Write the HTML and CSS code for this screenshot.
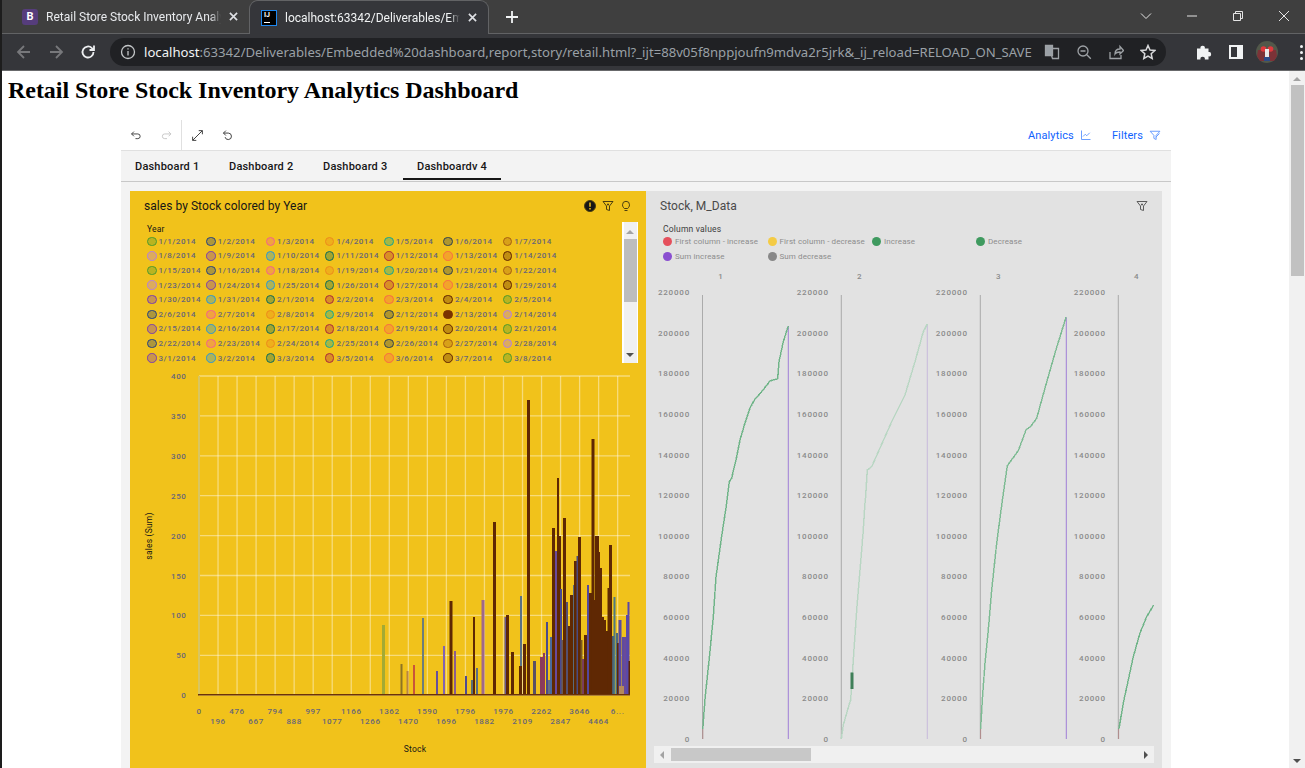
FILE: index.html
```html
<!DOCTYPE html>
<html lang="en">
<head>
  <meta charset="UTF-8">
  <title>Retail Store Stock Inventory Analytics Dashboard</title>
  <link rel="stylesheet" href="styles.css">
</head>
<body>

<div id="window">
  <!-- tab strip -->
  <div class="tabstrip">
    <div class="tab">
      <span class="favicon favicon-b">B</span>
      <span class="tab-title">Retail Store Stock Inventory Analy</span>
      <svg class="tab-close" viewBox="0 0 10 10"><path d="M1 1l8 8M9 1l-8 8"/></svg>
    </div>
    <div class="tab tab-active">
      <span class="favicon favicon-ij"><b>IJ</b><i></i></span>
      <span class="tab-title">localhost:63342/Deliverables/Emb</span>
      <svg class="tab-close" viewBox="0 0 10 10"><path d="M1 1l8 8M9 1l-8 8"/></svg>
    </div>
    <svg class="new-tab" viewBox="0 0 12 12"><path d="M6 0v12M0 6h12"/></svg>
    <div class="window-controls">
      <svg viewBox="0 0 12 12"><path d="M1 3.500l5 5 5-5"/></svg>
      <svg viewBox="0 0 12 12"><path d="M1 6h10"/></svg>
      <svg viewBox="0 0 12 12"><path d="M1.500 3.500h7v7h-7zM3.500 3.500v-2h7v7h-2"/></svg>
      <svg viewBox="0 0 12 12"><path d="M1 1l10 10M11 1L1 11"/></svg>
    </div>
  </div>

  <!-- address bar -->
  <div class="toolbar">
    <svg class="nav-icon dim" viewBox="0 0 16 16"><path d="M14 8H2M8 2L2 8l6 6"/></svg>
    <svg class="nav-icon dim" viewBox="0 0 16 16"><path d="M2 8h12M8 2l6 6-6 6"/></svg>
    <svg class="nav-icon bright" viewBox="0 0 16 16"><path d="M13.500 8a5.500 5.500 0 1 1-1.600-3.900L14 6M14 1.500V6H9.500"/></svg>
    <div class="omnibox">
      <svg class="info-icon" viewBox="0 0 16 16"><circle cx="8" cy="8" r="6.500"/><path d="M8 7v4.500M8 4.200v1.300"/></svg>
      <div class="url"><span class="url-host">localhost</span>:63342/Deliverables/Embedded%20dashboard,report,story/retail.html?_ijt=88v05f8nppjoufn9mdva2r5jrk&amp;_ij_reload=RELOAD_ON_SAVE</div>
      <div class="omni-actions">
        <svg viewBox="0 0 16 16"><path d="M1.500 1.500h7v10h-7z" fill="#9aa0a6"/><path d="M8.500 4.500h6v10h-6l-1-3h1"/></svg>
        <svg viewBox="0 0 16 16"><circle cx="7" cy="7" r="5"/><path d="M4.500 7h5M10.800 10.800l4 4"/></svg>
        <svg viewBox="0 0 16 16"><path d="M2 8v6.500h11V11M7 10c0-3 2-5 5-5V2.500L15.500 6.500 12 10V8c-2 0-4 .5-5 2z"/></svg>
        <svg viewBox="0 0 16 16"><path d="M8 1.500l2 4.500 4.800.5-3.600 3.200 1 4.800L8 12.100l-4.200 2.400 1-4.800L1.200 6.500 6 6z"/></svg>
      </div>
    </div>
    <div class="browser-actions">
      <svg class="puzzle" viewBox="0 0 16 16"><path d="M1 4.500h3.500a2.200 2.200 0 1 1 4.300 0H12.500V8a2.200 2.200 0 1 1 0 4.300V15.500H8.800a2.200 2.200 0 1 0-4.300 0H1z"/></svg>
      <span class="side-panel"></span>
      <svg class="avatar" viewBox="0 0 22 22"><circle cx="11" cy="11" r="11" fill="#52584a"/><path d="M2 9h18l1 6-3 5H4l-3-5z" fill="#7c3237"/><circle cx="7.500" cy="8" r="2.800" fill="#df3a3e"/><circle cx="14.500" cy="8" r="2.800" fill="#df3a3e"/><path d="M9 8h4v8H9z" fill="#e8e8e8"/><path d="M8 16h6v4H8z" fill="#2d4a86"/></svg>
      <span class="dots"><i></i><i></i><i></i></span>
    </div>
  </div>

  <div class="viewport">
    <div class="page">
      <h1>Retail Store Stock Inventory Analytics Dashboard</h1>

      <div class="report">
        <div class="report-toolbar">
          <div class="tool-group tool-group-first">
            <svg viewBox="0 0 16 16"><path d="M5 3L2 6l3 3M2 6h8a3 3 0 0 1 0 6H7"/></svg>
            <svg class="tool-off" viewBox="0 0 16 16"><path d="M11 3l3 3-3 3M14 6H6a3 3 0 0 0 0 6h3"/></svg>
          </div>
          <div class="tool-group">
            <svg viewBox="0 0 16 16"><path d="M9.500 2H14v4.500M14 2L2 14M2 9.500V14h4.500"/></svg>
            <svg viewBox="0 0 16 16"><path d="M6 2L3 5l3 3M3 5h6a4 4 0 1 1-4 5"/></svg>
          </div>
          <div class="report-links">
            <span class="report-link">Analytics
              <svg viewBox="0 0 16 16"><path d="M2 2v12h12M4 10l3-3 2 2 4-4"/></svg>
            </span>
            <span class="report-link">Filters
              <svg viewBox="0 0 16 16"><path d="M1.500 3h13L9.500 8.500V14l-3-1.500v-4z"/><path d="M9 11l5-5"/></svg>
            </span>
          </div>
        </div>

        <div class="report-tabs">
          <span class="report-tab">Dashboard 1</span>
          <span class="report-tab">Dashboard 2</span>
          <span class="report-tab">Dashboard 3</span>
          <span class="report-tab report-tab-active">Dashboardv 4</span>
        </div>

        <div class="panels">
          <div class="panel panel-yellow">
            <div class="panel-head">
              <span class="panel-title">sales by Stock colored by Year</span>
              <span class="panel-icons">
                <svg viewBox="0 0 12 12"><circle cx="6" cy="6" r="5.500" fill="#161616"/><path d="M6 2.500v4.200M6 8v1.500" stroke="#f1c21b" stroke-width="1.500"/></svg>
                <svg viewBox="0 0 12 12"><path d="M1 1.500h10L7.500 6v4.500l-3-1V6z"/><path d="M6 3.500v2M5 4.500h2"/></svg>
                <svg viewBox="0 0 12 12"><path d="M4.300 8.500C3.500 7.500 2.500 6.600 2.500 4.800a3.500 3.500 0 0 1 7 0c0 1.800-1 2.700-1.800 3.700zM4.500 10.500h3"/></svg>
              </span>
            </div>
            <div class="year-legend">
              <div class="year-legend-body">
                <div class="legend-name">Year</div>
                <div class="year-grid" id="year-grid"></div>
              </div>
              <div class="legend-scroll">
                <span class="arrow-up"></span>
                <span class="legend-thumb"></span>
                <span class="arrow-down"></span>
              </div>
            </div>
            <svg class="bar-chart" id="bar-chart" viewBox="130 368 516 400"></svg>
          </div>

          <div class="panel panel-gray">
            <div class="panel-head">
              <span class="panel-title">Stock, M_Data</span>
              <span class="panel-icons">
                <svg viewBox="0 0 12 12"><path d="M1 1.500h10L7.500 6v4.500l-3-1V6z"/><path d="M6 3.500v2M5 4.500h2"/></svg>
              </span>
            </div>
            <div class="col-legend">
              <div class="legend-name">Column values</div>
              <div class="col-grid" id="col-grid"></div>
            </div>
            <svg class="facet-chart" id="facet-chart" viewBox="646 268 508 478"></svg>
            <div class="hscroll">
              <span class="arrow-left"></span>
              <div class="hscroll-track"><span class="hscroll-thumb"></span></div>
              <span class="arrow-right"></span>
            </div>
          </div>
        </div>
      </div>
    </div>

    <div class="scrollbar">
      <span class="arrow-up"></span>
      <span class="scrollbar-thumb"></span>
      <span class="arrow-down"></span>
    </div>
  </div>
</div>

<script src="script.js"></script>
</body>
</html>
```

FILE: styles.css
```css
* {
  box-sizing: border-box;
}

body {
  margin: 0;
  height: 100vh;
  overflow: hidden;
  background: #fff;
  font-family: Roboto, "Liberation Sans", sans-serif;
}

#window {
  height: 100vh;
  display: flex;
  flex-direction: column;
  border-left: 2px solid #1d1d1d;
}

/* browser chrome */
.tabstrip {
  height: 34px;
  flex: none;
  display: flex;
  align-items: flex-end;
  padding-left: 10px;
  background: #3f3f3f;
  border-bottom: 1px solid #626365;
}

.tab {
  width: 237px;
  height: 33px;
  display: flex;
  align-items: center;
  padding: 0 11px 0 10px;
  color: #e8eaed;
  font-size: 12px;
}

.tab-active {
  width: 240px;
  height: 34px;
  margin-bottom: -1px;
  background: #35363a;
  border: 1px solid #626365;
  border-bottom: none;
  border-radius: 9px 9px 0 0;
  color: #f1f3f4;
  padding: 0 11px;
}

.favicon {
  width: 16px;
  height: 16px;
  flex: none;
  margin-right: 8px;
  border-radius: 3px;
}

.favicon-b {
  background: #563d7c;
  color: #fff;
  font-size: 11px;
  font-weight: 700;
  line-height: 16px;
  text-align: center;
}

.favicon-ij {
  position: relative;
  background: #000;
  border: 1px solid #1e88f0;
  border-radius: 0;
  color: #fff;
  font-size: 7px;
  line-height: 9px;
  padding-left: 2px;
}

.favicon-ij i {
  position: absolute;
  left: 2px;
  bottom: 2px;
  width: 6px;
  height: 1px;
  background: #fff;
}

.tab-title {
  flex: 1;
  min-width: 0;
  overflow: hidden;
  white-space: nowrap;
  -webkit-mask-image: linear-gradient(to right, #000 94%, transparent 100%);
  mask-image: linear-gradient(to right, #000 94%, transparent 100%);
}

.tab-close {
  width: 9px;
  height: 9px;
  flex: none;
  margin-left: 8px;
  fill: none;
  stroke: #dfe1e5;
  stroke-width: 1.800;
}

.new-tab {
  width: 12px;
  height: 12px;
  margin: 0 0 10px 17px;
  fill: none;
  stroke: #f1f3f4;
  stroke-width: 1.800;
}

.window-controls {
  margin-left: auto;
  display: flex;
  gap: 34px;
  padding: 0 15px 11px 0;
}

.window-controls svg {
  width: 12px;
  height: 12px;
  fill: none;
  stroke: #e4e4e4;
  stroke-width: 1;
}

.toolbar {
  height: 37px;
  flex: none;
  display: flex;
  align-items: center;
  gap: 16px;
  padding-left: 14px;
  background: #35363a;
  border-bottom: 1px solid #68696b;
}

.nav-icon {
  width: 16px;
  height: 16px;
  flex: none;
  fill: none;
  stroke-width: 1.800;
}

.dim {
  stroke: #77787b;
}

.bright {
  stroke: #eceef0;
}

.omnibox {
  width: 1056px;
  height: 28px;
  margin-left: -2px;
  display: flex;
  align-items: center;
  padding-left: 10px;
  background: #202124;
  border-radius: 14px;
}

.info-icon {
  width: 16px;
  height: 16px;
  flex: none;
  fill: none;
  stroke: #c4c7c9;
  stroke-width: 1.300;
}

.url {
  width: 888px;
  margin-left: 8px;
  overflow: hidden;
  white-space: nowrap;
  color: #9aa0a6;
  font-family: "Noto Sans", sans-serif;
  font-size: 13.150px;
}

.url-host {
  color: #f1f3f4;
}

.omni-actions {
  display: flex;
  gap: 16px;
  margin-left: 12px;
}

.omni-actions svg {
  width: 16px;
  height: 16px;
  fill: none;
  stroke: #9ea2a6;
  stroke-width: 1.300;
}

.omni-actions svg:last-child {
  stroke: #d8d9db;
  stroke-width: 1.500;
}

.browser-actions {
  display: flex;
  align-items: center;
  margin-left: 14px;
}

.puzzle {
  width: 16px;
  height: 16px;
  fill: #f1f3f4;
}

.side-panel {
  width: 14px;
  height: 14px;
  margin-left: 17px;
  background: #35363a;
  border: solid #f1f3f4;
  border-width: 2px 6px 2px 2px;
}

.avatar {
  width: 22px;
  height: 22px;
  margin-left: 13px;
}

.dots {
  display: flex;
  flex-direction: column;
  gap: 3px;
  margin-left: 22px;
}

.dots i {
  width: 3px;
  height: 3px;
  background: #f1f3f4;
  border-radius: 50%;
}

/* page */
.viewport {
  flex: 1;
  min-height: 0;
  display: flex;
}

.page {
  flex: 1;
  min-width: 0;
  display: flex;
  flex-direction: column;
  overflow: hidden;
}

h1 {
  margin: 6px 0 16px 6px;
  height: 27px;
  color: #000;
  font-family: "Liberation Serif", serif;
  font-size: 24px;
  font-weight: 700;
  letter-spacing: -0.04px;
  line-height: 27px;
  white-space: nowrap;
}

.scrollbar {
  width: 16px;
  flex: none;
  display: flex;
  flex-direction: column;
  align-items: center;
  background: #f1f1f1;
}

.scrollbar .arrow-up {
  margin: 6px 0 4px;
}

.scrollbar-thumb {
  width: 13px;
  height: 191px;
  background: #c1c1c1;
}

.scrollbar .arrow-down {
  margin-top: auto;
  margin-bottom: 5px;
}

.arrow-up,
.arrow-down,
.arrow-left,
.arrow-right {
  width: 0;
  height: 0;
  flex: none;
  border: 4px solid transparent;
}

.arrow-up {
  border-top: 0;
  border-bottom: 4px solid #a3a3a3;
}

.arrow-down {
  border-bottom: 0;
  border-top: 4px solid #505050;
}

.arrow-left {
  border-left: 0;
  border-right: 4px solid #a3a3a3;
}

.arrow-right {
  border-right: 0;
  border-left: 4px solid #505050;
}

/* embedded report */
.report {
  flex: 1;
  min-height: 0;
  width: 1050px;
  margin-left: 119px;
  display: flex;
  flex-direction: column;
}

.report-toolbar {
  height: 31px;
  flex: none;
  display: flex;
  align-items: center;
  border-bottom: 1px solid #e0e0e0;
}

.report-toolbar svg {
  width: 13px;
  height: 13px;
  fill: none;
  stroke: #3f3f3f;
  stroke-width: 1.200;
}

.report-toolbar .tool-off {
  stroke: #c6c6c6;
}

.tool-group {
  height: 30px;
  display: flex;
  align-items: center;
  gap: 17px;
  padding: 0 9px;
}

.tool-group-first {
  width: 61px;
  border-right: 1px solid #e0e0e0;
}

.report-links {
  margin-left: auto;
  display: flex;
  gap: 20px;
  padding-right: 10px;
}

.report-link {
  display: flex;
  align-items: center;
  gap: 6px;
  color: #0f62fe;
  font-size: 11px;
  letter-spacing: 0.12px;
}

.report-link svg {
  width: 12px;
  height: 12px;
  stroke: #5a93ff;
}

.report-tabs {
  height: 31px;
  flex: none;
  display: flex;
  padding-left: 14px;
  gap: 29px;
  background: #f3f3f3;
  border-bottom: 1px solid #c8c8c8;
}

.report-tab {
  position: relative;
  width: 65px;
  color: #161616;
  font-size: 11px;
  font-weight: 500;
  letter-spacing: 0.2px;
  line-height: 31px;
  white-space: nowrap;
}

.report-tab-active::after {
  content: "";
  position: absolute;
  left: -14px;
  width: 98px;
  bottom: 1px;
  height: 2px;
  background: #161616;
}

.panels {
  flex: 1;
  min-height: 0;
  display: flex;
  padding: 9px 9px 0;
  background: #f3f3f3;
  overflow: hidden;
}

.panel {
  width: 516px;
  flex: none;
  display: flex;
  flex-direction: column;
}

.panel-yellow {
  background: #f1c21b;
}

.panel-gray {
  background: #e2e2e2;
}

.panel-head {
  height: 31px;
  flex: none;
  display: flex;
  align-items: center;
  justify-content: space-between;
  padding: 0 14px 2px;
}

.panel-title {
  color: #161616;
  font-size: 12px;
  letter-spacing: 0.05px;
}

.panel-gray .panel-title {
  color: #4a4a4a;
}

.panel-icons {
  display: flex;
  gap: 6px;
}

.panel-icons svg {
  width: 12px;
  height: 12px;
  fill: none;
  stroke: #4c3f10;
  stroke-width: 1;
}

.panel-gray .panel-icons svg {
  stroke: #5c5c5c;
}

.year-legend {
  height: 141px;
  flex: none;
  display: flex;
  margin: 0 8px 0 10px;
}

.year-legend-body {
  flex: 1;
  padding: 1px 0 0 7px;
}

.legend-name {
  height: 11px;
  color: #161616;
  font-size: 8.500px;
  line-height: 12px;
  letter-spacing: 0.2px;
}

.year-grid {
  display: grid;
  grid-template-columns: repeat(7, 59.300px);
  grid-auto-rows: 14.600px;
}

.year-item,
.col-item {
  display: flex;
  align-items: center;
  gap: 2px;
  color: #66657a;
  font-size: 8px;
  font-weight: 500;
  letter-spacing: 0.5px;
  white-space: nowrap;
}

.dot {
  width: 9.500px;
  height: 9.500px;
  flex: none;
  border: 1.500px solid;
  border-radius: 50%;
}

.legend-scroll {
  width: 16px;
  flex: none;
  display: flex;
  flex-direction: column;
  align-items: center;
  background: linear-gradient(#f0f0f0, #f0f0f0) center / 13px 100% no-repeat, #fff;
}

.legend-scroll .arrow-up {
  margin: 8px 0 5px;
}

.legend-thumb {
  width: 13px;
  height: 63px;
  background: #bdbdbd;
}

.legend-scroll .arrow-down {
  margin-top: auto;
  margin-bottom: 6px;
}

.bar-chart {
  width: 516px;
  height: 400px;
  flex: none;
  margin-top: 5px;
}

.col-legend {
  height: 46px;
  flex: none;
  padding: 1px 0 0 17px;
}

.col-legend .legend-name {
  color: #3d3d3d;
}

.col-grid {
  display: grid;
  grid-template-columns: 104.500px 104.500px 104px 120px;
  grid-auto-rows: 15px;
}

.col-item {
  gap: 3px;
  color: #8d8d8d;
  font-weight: 400;
  letter-spacing: 0.1px;
}

.col-item .dot {
  width: 9px;
  height: 9px;
  border: none;
}

.facet-chart {
  width: 508px;
  height: 478px;
  flex: none;
}

.facet-curve {
  shape-rendering: crispEdges;
}

.hscroll {
  width: 500px;
  height: 17px;
  flex: none;
  margin-left: 8px;
  display: flex;
  align-items: center;
  gap: 4px;
  padding: 0 6px;
  background: #f0f0f0;
}

.hscroll-track {
  flex: 1;
  height: 13px;
}

.hscroll-thumb {
  display: block;
  width: 140px;
  height: 13px;
  margin-left: 3px;
  background: #c8c8c8;
}

/* svg chart text */
.tick {
  fill: #66657a;
  font-family: Roboto, sans-serif;
  font-size: 8px;
  font-weight: 500;
  letter-spacing: 0.6px;
}

.tick-gray {
  fill: #8a8a8a;
  letter-spacing: 0.8px;
}

.axis-name {
  fill: #161616;
  font-family: Roboto, sans-serif;
  font-size: 8.500px;
  letter-spacing: 0.2px;
}
```

FILE: script.js
```js
const SVG_NS = "http://www.w3.org/2000/svg";

const palette = [
  "#4f9a2b", "#27427f", "#f2648c", "#ee8b1c", "#14a593", "#2f4150", "#a85f12",
  "#b57fe0", "#7a3db0", "#2b97d6", "#0f6b58", "#ad2a3a", "#fa6a45", "#602300"
];

const dates = [
  "1/1", "1/2", "1/3", "1/4", "1/5", "1/6", "1/7",
  "1/8", "1/9", "1/10", "1/11", "1/12", "1/13", "1/14",
  "1/15", "1/16", "1/18", "1/19", "1/20", "1/21", "1/22",
  "1/23", "1/24", "1/25", "1/26", "1/27", "1/28", "1/29",
  "1/30", "1/31", "2/1", "2/2", "2/3", "2/4", "2/5",
  "2/6", "2/7", "2/8", "2/9", "2/12", "2/13", "2/14",
  "2/15", "2/16", "2/17", "2/18", "2/19", "2/20", "2/21",
  "2/22", "2/23", "2/24", "2/25", "2/26", "2/27", "2/28",
  "3/1", "3/2", "3/3", "3/5", "3/6", "3/7", "3/8"
];

const columnValues = [
  ["First column - increase", "#e5505c"],
  ["First column - decrease", "#f4cb45"],
  ["Increase", "#3f9a5f"],
  ["Decrease", "#3f9a5f"],
  ["Sum increase", "#8a4fd0"],
  ["Sum decrease", "#888888"]
];

const xTicks = ["0", "196", "476", "667", "794", "888", "997", "1077", "1166", "1266", "1362", "1470",
  "1590", "1696", "1796", "1882", "1976", "2109", "2262", "2847", "3646", "4464", "6..."];

const DARK = "#5f2803";
// x, width, top y, colour
const bars = [
  [382, 3, 625, "#a3aa34"], [400.500, 2, 664, "#8e7424"], [406.500, 2, 671, "#b98440"], [413, 2, 665, "#c9553a"],
  [422, 2, 618, "#6d7d7c"], [436, 2, 671, "#66509c"], [443, 2, 646, "#8062b2"], [449.500, 3, 601, DARK],
  [454, 2, 651, "#8c5c90"], [465, 2, 676, "#4f4a92"], [471, 2, 680, "#5a6e76"], [473, 2, 617, DARK],
  [476, 2, 668, "#5a6e86"], [481.500, 3, 600, "#a0688a"], [493, 3, 522, DARK], [504.500, 2, 617, "#6a5a92"],
  [506, 3, 615, DARK], [511, 3, 652, DARK], [520, 2, 596, "#5a7284"], [519, 3, 666, DARK],
  [523, 3, 644, DARK], [527, 3, 400, DARK], [533, 3, 661, "#5a5064"], [540, 3, 657, "#8a3a5c"],
  [543, 2, 653, "#8e3a5a"], [546, 2, 622, "#4a4a8c"], [548, 2, 680, "#6a7080"], [550, 2, 637, "#4a6a9c"], [552, 3, 528, DARK],
  [555, 2, 551, "#6a4a9c"], [557, 2, 478, DARK], [558, 3, 536, DARK], [560, 2, 589, "#4a4a90"], [561.500, 2, 640, "#6a5a50"],
  [563, 3, 518, DARK], [566, 2, 602, "#55506e"], [568, 3, 626, DARK], [570, 3, 595, DARK],
  [573, 2, 585, "#5a6a7c"], [574, 3, 561, DARK], [576.500, 2, 556, "#4a4a80"], [578, 3, 537, DARK], [580.500, 2, 640, "#7a5a20"],
  [582, 2, 659, "#7a3d5c"], [584, 3, 635, DARK], [587, 2, 585, "#54479e"], [589, 3, 593, DARK],
  [591.500, 3, 439, DARK], [594, 2, 600, DARK], [595, 4, 536, DARK], [597, 3, 552, DARK], [599, 3, 568, DARK],
  [601, 3, 617, DARK], [603, 3, 620, DARK], [605, 4, 631, DARK], [607.500, 4, 588, DARK],
  [609, 3, 545, DARK], [612, 2, 636, "#4c5a6a"], [613.500, 2, 597, "#4f7a82"], [616, 2, 633, "#4a6a80"],
  [617, 3, 643, DARK], [618.500, 3, 620, "#594aa2"], [622, 3, 637, "#5f4aa0"], [624, 2, 637, "#6a4a98"],
  [626, 2, 615, "#5a4aa8"], [627.500, 2, 602, "#5a46aa"], [628.500, 1.500, 661, DARK], [619, 5, 686, "#b58a5a"]
];

// page coordinates, read off the four facets
const facets = [
  { axis: 702.500, end: 788.300, endColor: "#a07fd8", curve: "#6fb488", red: 702.500,
    points: [[702.800, 729], [705, 699], [709.300, 658], [713.300, 617], [716, 577], [721.700, 536], [726.700, 503],
      [729.300, 481.700], [731.700, 478], [736.700, 456.700], [740, 440], [745, 423], [750, 408], [755, 399],
      [761.700, 391.700], [770, 381], [777.700, 378.700], [779, 361.700], [783.300, 341.700], [788.300, 326]] },
  { axis: 841.300, end: 927.300, endColor: "#c8bbdd", curve: "#b9d6c3", red: null,
    points: [[841.300, 739], [843.300, 725], [849, 705], [850.700, 700], [853.300, 660], [856.700, 610], [860, 570],
      [863.300, 530], [865, 503], [865.700, 495.700], [867.300, 470], [871.700, 466.700], [880, 448],
      [891.700, 421.700], [905, 395], [915, 361.700], [923.300, 331.700], [927.300, 324]] },
  { axis: 980.300, end: 1066.300, endColor: "#a07fd8", curve: "#7dbb93", red: 980.300,
    points: [[980.600, 729], [982.300, 700], [985, 663], [988.300, 630], [991.700, 590], [996.700, 543], [1002, 503],
      [1005, 481.700], [1007.300, 465.700], [1018.300, 450.700], [1026, 430], [1031, 426], [1036.700, 418.300],
      [1045, 388], [1055, 353], [1066, 317.300]] },
  { axis: 1118.300, end: null, curve: "#6fb488", red: 1118.300,
    points: [[1118.600, 729], [1119.300, 726.700], [1123.300, 703], [1128.300, 680], [1133.300, 656.700],
      [1140, 633], [1146.700, 616.700], [1153.700, 605]] }
];

function svgEl(parent, name, attrs, text) {
  const el = document.createElementNS(SVG_NS, name);
  for (const key in attrs) {
    el.setAttribute(key, attrs[key]);
  }
  if (text !== undefined) {
    el.textContent = text;
  }
  parent.appendChild(el);
  return el;
}

function line(parent, x1, y1, x2, y2, stroke, width) {
  svgEl(parent, "line", { x1, y1, x2, y2, stroke, "stroke-width": width });
}

function buildYearLegend() {
  const grid = document.getElementById("year-grid");
  dates.forEach((d, i) => {
    // the colour scale jumps ahead at 1/30
    const color = palette[(i < 28 ? i : i + 8) % palette.length];
    const item = document.createElement("div");
    item.className = "year-item";
    const dot = document.createElement("span");
    dot.className = "dot";
    dot.style.borderColor = color;
    // the selected date is the only solid one
    dot.style.background = d === "2/13" ? "#7a3300" : color + "55";
    if (d === "2/13") {
      dot.style.borderColor = "#7a3300";
    }
    item.appendChild(dot);
    item.appendChild(document.createTextNode(`${d}/2014`));
    grid.appendChild(item);
  });
}

function buildColumnLegend() {
  const grid = document.getElementById("col-grid");
  columnValues.forEach(([label, color]) => {
    const item = document.createElement("div");
    item.className = "col-item";
    const dot = document.createElement("span");
    dot.className = "dot";
    dot.style.background = color;
    item.appendChild(dot);
    item.appendChild(document.createTextNode(label));
    grid.appendChild(item);
  });
}

function buildBarChart() {
  const svg = document.getElementById("bar-chart");
  const gridColor = "rgba(255,255,255,0.42)";

  for (let i = 0; i <= 8; i++) {
    const y = 376 + i * 39.900;
    line(svg, 199, y, 630, y, gridColor, 1.300);
    svgEl(svg, "text", { class: "tick", x: 186.500, y: y + 3, "text-anchor": "end" }, String(400 - i * 50));
  }

  xTicks.forEach((label, i) => {
    const x = 199 + i * 19.030;
    if (i > 0) {
      line(svg, x, 376, x, 695, gridColor, 1.300);
    }
    svgEl(svg, "text", { class: "tick", x, y: i % 2 ? 724 : 714, "text-anchor": "middle" }, label);
  });
  line(svg, 199, 376, 199, 695, "#d9c560", 2);

  bars.forEach(([x, w, top, color]) => {
    svgEl(svg, "rect", { x, y: top, width: w, height: 695 - top, fill: color });
  });
  line(svg, 198, 694.800, 630, 694.800, "#6b3208", 1.500);

  svgEl(svg, "text", { class: "axis-name", x: 415, y: 752, "text-anchor": "middle" }, "Stock");
  svgEl(svg, "text", { class: "axis-name", x: 0, y: 0, "text-anchor": "middle",
    transform: "translate(152 536) rotate(-90)" }, "sales (Sum)");
}

function buildFacetChart() {
  const svg = document.getElementById("facet-chart");

  facets.forEach((f, n) => {
    svgEl(svg, "text", { class: "tick tick-gray", x: f.axis + 18.500, y: 279, "text-anchor": "middle" }, String(n + 1));

    for (let i = 0; i <= 11; i++) {
      const y = 739 - i * 40.640;
      svgEl(svg, "text", { class: "tick tick-gray", x: f.axis - 12.500, y: y + 3, "text-anchor": "end" }, String(i * 20000));
    }

    line(svg, f.axis, 295, f.axis, 739, "#ababab", 1);
    if (f.end) {
      line(svg, f.end, f.points[f.points.length - 1][1], f.end, 739, f.endColor, 1);
    }
    const pts = f.points.map((p) => p.join(",")).join(" ");
    // pale band under the line gives the stepped look of the waterfall bars
    svgEl(svg, "polyline", { class: "facet-curve", points: pts, fill: "none", stroke: f.curve, "stroke-opacity": 0.45, "stroke-width": 2 });
    svgEl(svg, "polyline", { class: "facet-curve", points: pts, fill: "none", stroke: f.curve, "stroke-width": 1 });
    if (f.red) {
      line(svg, f.red + 0.300, 729, f.red + 0.300, 739, "#b08a8a", 1);
    }
  });

  // the one visible decrease block in facet 2
  svgEl(svg, "rect", { x: 850.500, y: 672.500, width: 3, height: 16.500, fill: "#3f7f58" });
}

buildYearLegend();
buildColumnLegend();
buildBarChart();
buildFacetChart();
```
